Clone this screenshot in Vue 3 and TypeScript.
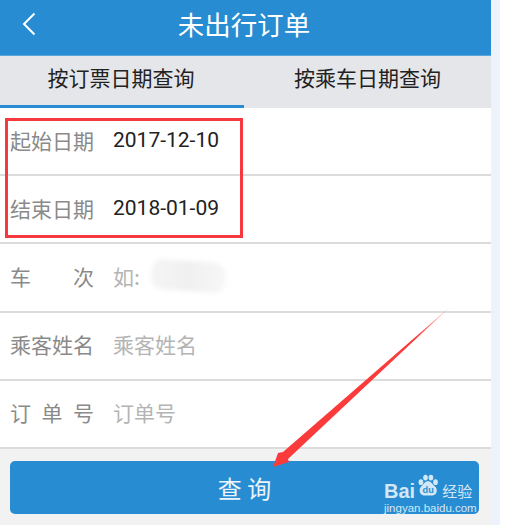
<template>
  <div class="page">
    <div class="phone">
      <header class="top-bar">
        <svg class="back-icon" width="14" height="24" viewBox="0 0 14 24">
          <path d="M12.5 1.500 L2 12 L12.500 22.500" fill="none" stroke="#fff" stroke-width="2" />
        </svg>
        <h1 class="title">未出行订单</h1>
      </header>

      <nav class="tabs">
        <div v-for="(tab, i) in tabs" :key="tab" class="tab" :class="{ active: i === 0 }">{{ tab }}</div>
      </nav>

      <section class="form">
        <div v-for="row in rows" :key="row.chars.join('')" class="form-row">
          <div class="label">
            <span v-for="(c, i) in row.chars" :key="i">{{ c }}</span>
          </div>
          <div class="field" :class="{ filled: row.filled }">{{ row.value }}</div>
          <div v-if="row.smudge" class="smudge"></div>
        </div>
        <div class="highlight"></div>
      </section>

      <div class="action">
        <button class="query-btn">查 询</button>
      </div>
    </div>
    <div class="side-strip"></div>

    <svg class="arrow" width="506" height="525" viewBox="0 0 506 525">
      <defs>
        <linearGradient id="arrowFade" gradientUnits="userSpaceOnUse" x1="451" y1="306" x2="415" y2="340">
          <stop offset="0" stop-color="#fb3b3b" stop-opacity="0.25" />
          <stop offset="1" stop-color="#fb3b3b" />
        </linearGradient>
      </defs>
      <path d="M451 306 L283 452 L278 453 L273 467 L289 462 L288 459 Z" fill="url(#arrowFade)" />
    </svg>

    <div class="watermark">
      <div class="wm-logo">
        <span class="wm-bai">Bai</span>
        <svg class="wm-paw" width="20" height="25" viewBox="0 0 24 28">
          <g fill="#d3e8f6">
            <ellipse cx="3.500" cy="10" rx="2.800" ry="3.400" />
            <ellipse cx="9" cy="4.500" rx="2.800" ry="3.500" />
            <ellipse cx="15.500" cy="4.500" rx="2.800" ry="3.500" />
            <ellipse cx="21" cy="10" rx="2.800" ry="3.400" />
            <path d="M12 9 C8 9 7.500 12 5 14 C2.500 16 2 18 2 20 C2 24 5 26 8 26 L16 26 C20 26 22.500 24 22.500 20 C22.500 17 21 15.500 19 14 C16.500 12 16 9 12 9 Z" />
          </g>
          <text x="12.200" y="23.500" text-anchor="middle" class="wm-du">du</text>
        </svg>
        <span class="wm-cn">经验</span>
      </div>
      <div class="wm-url">jingyan.baidu.com</div>
    </div>
  </div>
</template>

<script setup lang="ts">
interface Row {
  chars: string[]
  value: string
  filled?: boolean
  smudge?: boolean
}

const tabs = ['按订票日期查询', '按乘车日期查询']

const rows: Row[] = [
  { chars: ['起', '始', '日', '期'], value: '2017-12-10', filled: true },
  { chars: ['结', '束', '日', '期'], value: '2018-01-09', filled: true },
  { chars: ['车', '次'], value: '如:', smudge: true },
  { chars: ['乘', '客', '姓', '名'], value: '乘客姓名' },
  { chars: ['订', '单', '号'], value: '订单号' }
]
</script>

<style>
html,
body {
  margin: 0;
  background: #fff;
}
</style>

<style scoped>
.page {
  position: relative;
  display: flex;
  width: 506px;
  height: 525px;
  overflow: hidden;
  background: #fff;
  font-family: "Noto Sans CJK SC", "Noto Sans", sans-serif;
}

.phone {
  display: flex;
  flex-direction: column;
  width: 491px;
  background: #f2f2f2;
}

.side-strip {
  width: 9px;
  background: #eef2fa;
}

.top-bar {
  position: relative;
  flex: none;
  display: flex;
  align-items: center;
  justify-content: center;
  height: 55px;
  background: #278cd2;
  border-bottom: 1px solid #5aa7dc;
}

.back-icon {
  position: absolute;
  left: 22px;
  top: 12px;
}

.title {
  margin: 0 3px 8px 0;
  color: #fff;
  font-size: 26.500px;
  font-weight: 400;
  line-height: 1.2;
}

.tabs {
  flex: none;
  display: flex;
  height: 52px;
  background: #e5e6ea;
}

.tab {
  flex: 1;
  height: 49px;
  line-height: 43px;
  text-align: center;
  color: #222;
  font-size: 21px;
}

.tab.active {
  flex: none;
  width: 244px;
  border-bottom: 3px solid #278cd2;
  padding-right: 2px;
  box-sizing: border-box;
  height: 52px;
}

.form {
  position: relative;
  flex: none;
  background: #fff;
}

.form-row {
  position: relative;
  display: flex;
  align-items: center;
  box-sizing: border-box;
  height: 68.200px;
  padding: 0 0 2px 10px;
  border-bottom: 2px solid #dcdcdc;
}

.label {
  display: flex;
  justify-content: space-between;
  width: 84px;
  color: #8a8a8a;
  font-size: 21px;
  line-height: 1.2;
}

.field {
  margin-left: 19px;
  color: #b4b4b4;
  font-size: 21px;
  line-height: 1.2;
}

.field.filled {
  color: #222;
  font-family: Roboto, "Liberation Sans", sans-serif;
}

.smudge {
  position: absolute;
  left: 151px;
  top: 17px;
  width: 75px;
  height: 30px;
  border-radius: 10px 14px 12px 12px;
  background: linear-gradient(90deg, #f5f5f5, #f0f0f0 50%, #f7f7f7);
  filter: blur(2px);
  transform: rotate(4deg);
}

.highlight {
  position: absolute;
  left: 5px;
  top: 10px;
  width: 232px;
  height: 114px;
  border: 3px solid #f5393f;
}

.action {
  flex: none;
  padding: 12px 12px 10px 10px;
}

.query-btn {
  display: block;
  width: 469px;
  height: 53px;
  border: none;
  border-radius: 5px;
  background: #278cd2;
  color: #eaf4fb;
  font-family: inherit;
  font-size: 24px;
  letter-spacing: 0;
}

.arrow {
  position: absolute;
  left: 0;
  top: 0;
  pointer-events: none;
}

.watermark {
  position: absolute;
  left: 384px;
  top: 472px;
  width: 92px;
  color: #d3e8f6;
  font-family: "Liberation Sans", Arial, sans-serif;
}

.wm-logo {
  display: flex;
  align-items: flex-end;
  height: 26px;
}

.wm-bai {
  font-size: 20px;
  font-weight: 700;
  line-height: 14px;
}

.wm-paw {
  margin: 0 4px 0 3px;
}

.wm-du {
  fill: #278cd2;
  font-family: "Liberation Sans", Arial, sans-serif;
  font-size: 11px;
  font-weight: 700;
}

.wm-cn {
  font-family: "Noto Sans CJK SC", sans-serif;
  font-size: 15px;
  line-height: 14px;
}

.wm-url {
  margin-top: 3px;
  font-size: 11.500px;
  line-height: 14px;
  white-space: nowrap;
}
</style>
